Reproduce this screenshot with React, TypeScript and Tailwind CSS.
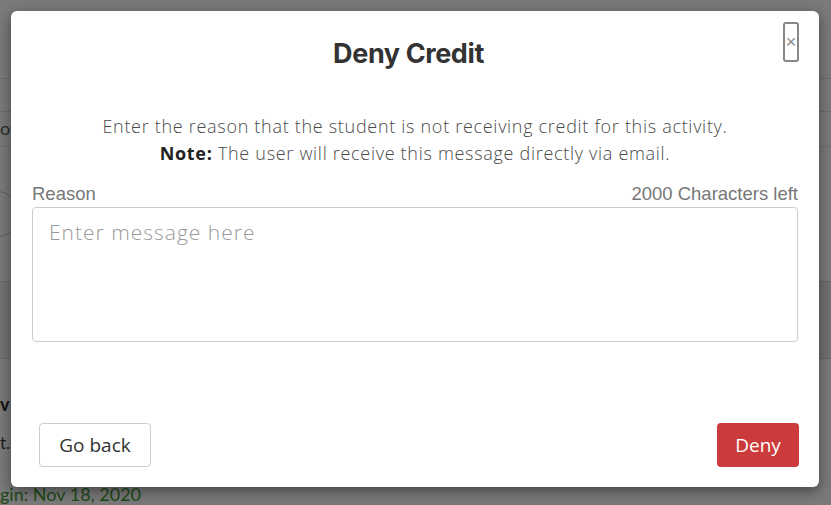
import React from "react";

const sans = { fontFamily: "'Open Sans', 'Noto Sans', sans-serif" };
const arial = { fontFamily: "'Liberation Sans', Arial, sans-serif" };

function Background() {
  return (
    <div className="flex flex-col w-full h-full text-[#222]" style={{ fontFamily: "Lato, 'Noto Sans', sans-serif" }}>
      <div className="h-[80px] border-b border-[#6c6c6c]" />
      <div className="h-[33px] border-b border-[#6c6c6c]" />
      <div className="h-[35px] border-b border-[#707070] flex items-center">
        <span className="text-[18px] text-[#2c2c2c]">oy</span>
      </div>
      <div className="h-[135px] flex items-center">
        <div className="w-[46px] h-[46px] rounded-full border border-[#5f5f5f] -ml-[26px]" />
      </div>
      <div className="h-[79px] bg-[#727272] border-y border-[#686868]" />
      <div className="flex flex-col pt-[34px] gap-[17px]">
        <span className="text-[18px] font-bold text-[#111] leading-[22px]">v</span>
        <span className="text-[17px] text-[#1a1a1a] leading-[22px]">t.s</span>
        <span className="text-[18px] text-[#1f4a18] leading-[22px] mt-[12px]">gin: Nov 18, 2020</span>
      </div>
    </div>
  );
}

export default function App() {
  return (
    <div className="relative w-[831px] h-[505px] overflow-hidden bg-[#7a7a7a]">
      <Background />

      {/* modal overlay */}
      <div className="absolute inset-0 p-[11px] pr-[12px] pb-[18px] flex">
        <div className="flex-1 bg-white rounded-[6px] shadow-[0_4px_14px_rgba(0,0,0,0.45)] flex flex-col" style={sans}>
          <div className="relative h-[90px] flex items-center justify-center">
            <h2 className="text-[27px] font-bold text-[#333] tracking-[-0.4px] -mt-[4px] -ml-[13px]" style={{ fontFamily: "Inter, sans-serif" }}>Deny Credit</h2>
            <button className="absolute right-[20px] top-[11px] w-[16px] h-[40px] border-2 border-[#888] rounded-[3px] text-[#888] text-[18px] leading-none flex items-center justify-center" style={arial}>×</button>
          </div>
          <div className="px-[21px] flex flex-col">
            <div className="text-center text-[18px] font-light text-[#4a4a4a] leading-[27px] tracking-[0.7px] mt-[12px]">
              <p>Enter the reason that the student is not receiving credit for this activity.</p>
              <p><span className="font-bold text-[#222]">Note:</span> The user will receive this message directly via email.</p>
            </div>
            <div className="flex justify-between mt-[16px] text-[18.5px] text-[#777] leading-[22px]" style={arial}>
              <span>Reason</span>
              <span>2000 Characters left</span>
            </div>
            <textarea
              className="mt-[2px] h-[135px] w-full border border-[#ccc] rounded-[4px] px-[16px] py-[9px] text-[21px] font-light tracking-[1px] text-[#333] placeholder:text-[#999] resize-none outline-none"
              placeholder="Enter message here"
            />
          </div>
          <div className="mt-auto mb-[20px] pl-[28px] pr-[20px] flex justify-between">
            <button className="h-[44px] w-[112px] border border-[#ccc] rounded-[4px] text-[19px] text-[#333] bg-white">Go back</button>
            <button className="h-[44px] w-[82px] rounded-[4px] text-[19px] text-white bg-[#cc3b3b]">Deny</button>
          </div>
        </div>
      </div>
    </div>
  );
}
